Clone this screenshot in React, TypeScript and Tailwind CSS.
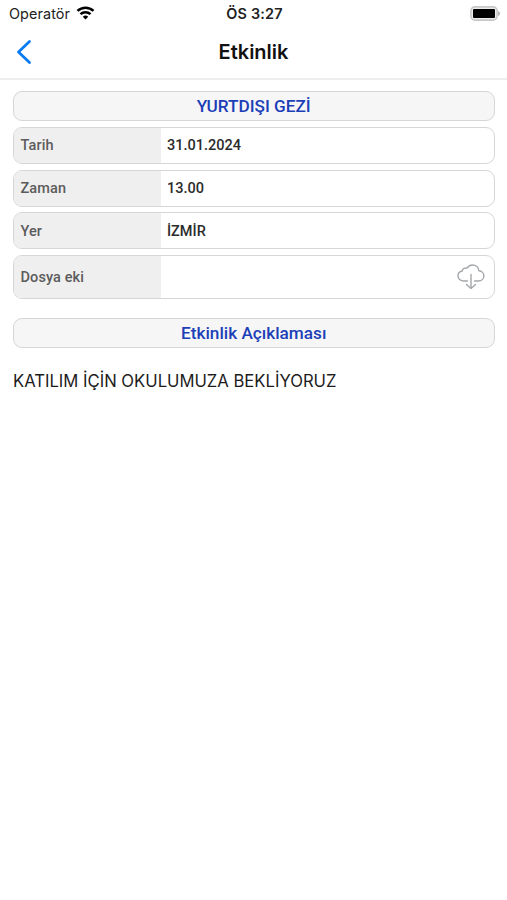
import React from "react";

interface RowProps {
    label: string;
    value?: string;
    tall?: boolean;
    children?: React.ReactNode;
}

const details = [
    { label: "Tarih", value: "31.01.2024" },
    { label: "Zaman", value: "13.00" },
    { label: "Yer", value: "İZMİR" },
];

const SectionTitle: React.FC<{ text: string }> = ({ text }) => (
    <h2 className="flex h-[30px] items-center justify-center rounded-[9px] border border-[#d6d6d6] bg-[#f6f6f7] pt-px font-['Roboto',sans-serif] text-[17.2px] font-medium text-[#1c3fb7]">
        {text}
    </h2>
);

const Row: React.FC<RowProps> = ({ label, value, tall, children }) => (
    <div
        className={`flex overflow-hidden rounded-[9px] border border-[#d6d6d6] bg-white font-['Roboto',sans-serif] text-[14.5px] font-medium ${tall ? "h-11" : "h-[37px]"}`}
    >
        <div className="flex w-[147px] items-center bg-[#efefef] pl-[6.5px] pt-[1.5px] tracking-[0.1px] text-[#5c5c5c]">
            {label}
        </div>
        <div className="flex flex-1 items-center pl-[6px] pt-[1.5px] text-[#2b2b2b]">{value}</div>
        {children}
    </div>
);

const StatusBar = () => (
    <div className="grid h-[27px] grid-cols-3 items-center pl-[9px] pr-[7px] font-['Inter',sans-serif] text-[14.4px] text-[#222]">
        <div className="flex items-center gap-[6px]">
            <span className="tracking-[0.1px]">Operatör</span>
            <svg className="-mt-px" width="19" height="14" viewBox="0 0 18 14" fill="none" stroke="#000" strokeWidth="2.5">
                <path d="M1 4.9a11.6 11.6 0 0 1 16 0" />
                <path d="M4 8.2a7.2 7.2 0 0 1 10 0" />
                <path d="M9 13.4 6.3 10.7a4 4 0 0 1 5.4 0Z" fill="#000" stroke="none" />
            </svg>
        </div>
        <span className="text-center font-semibold tracking-[0.2px]">ÖS 3:27</span>
        <svg className="-mt-px justify-self-end" width="30" height="15" viewBox="0 0 30 15">
            <rect x=".9" y=".9" width="26.2" height="13.2" rx="4" fill="#ececec" stroke="#c8c8c8" strokeWidth="1.6" />
            <rect x="3" y="3" width="22" height="9" rx="1" fill="#000" />
            <path d="M28.2 5c2.2.9 2.2 4.1 0 5Z" fill="#a6a6a6" />
        </svg>
    </div>
);

const App = () => {
    return (
        <main className="min-h-screen w-full bg-white">
            <StatusBar />
            <header className="grid h-[53px] grid-cols-[40px_1fr_40px] items-center border-b-2 border-[#eeeeee] px-[15px] pb-[2px]">
                <svg width="18" height="26" viewBox="0 0 18 26" fill="none" stroke="#0b7bf3" strokeWidth="2.8" strokeLinecap="round" strokeLinejoin="round">
                    <path d="M14.5 2.5 3.5 13 14.5 23.5" />
                </svg>
                <h1 className="text-center font-['Inter',sans-serif] text-[20px] font-semibold text-[#111]">
                    Etkinlik
                </h1>
            </header>

            <section className="flex flex-col gap-[5.8px] pl-[13px] pr-[12.5px] pt-[11px]">
                <SectionTitle text="YURTDIŞI GEZİ" />
                {details.map((item) => (
                    <Row key={item.label} label={item.label} value={item.value} />
                ))}
                <Row label="Dosya eki" tall>
                    <svg className="mr-[9px] self-center" width="28" height="26" viewBox="0 0 28 26" fill="none" stroke="#a4a7aa" strokeWidth="1.4" strokeLinecap="round" strokeLinejoin="round">
                        <path d="M10.5 17H6.8C3.5 17 1 14.8 1 11.9c0-2.5 1.7-4.5 4.2-4.9C5.7 4.7 8 3.5 10.1 4.1 11.4 2 13.2 1 15.4 1c3.5 0 6.2 2.4 6.5 5.8 2.8.3 5 2.4 5 5.1 0 3-2.5 5.1-5.6 5.1h-3.8" />
                        <path d="M14 10.5v14M9.5 20.5l4.5 4 4.5-4" />
                    </svg>
                </Row>
            </section>

            <section className="pl-[13px] pr-[12.5px] pt-[19.3px]">
                <SectionTitle text="Etkinlik Açıklaması" />
                <p className="mt-[21px] font-['Inter',sans-serif] text-[16.65px] leading-6 text-[#1c1c1c]">
                    KATILIM İÇİN OKULUMUZA BEKLİYORUZ
                </p>
            </section>
        </main>
    );
};

export default App;
